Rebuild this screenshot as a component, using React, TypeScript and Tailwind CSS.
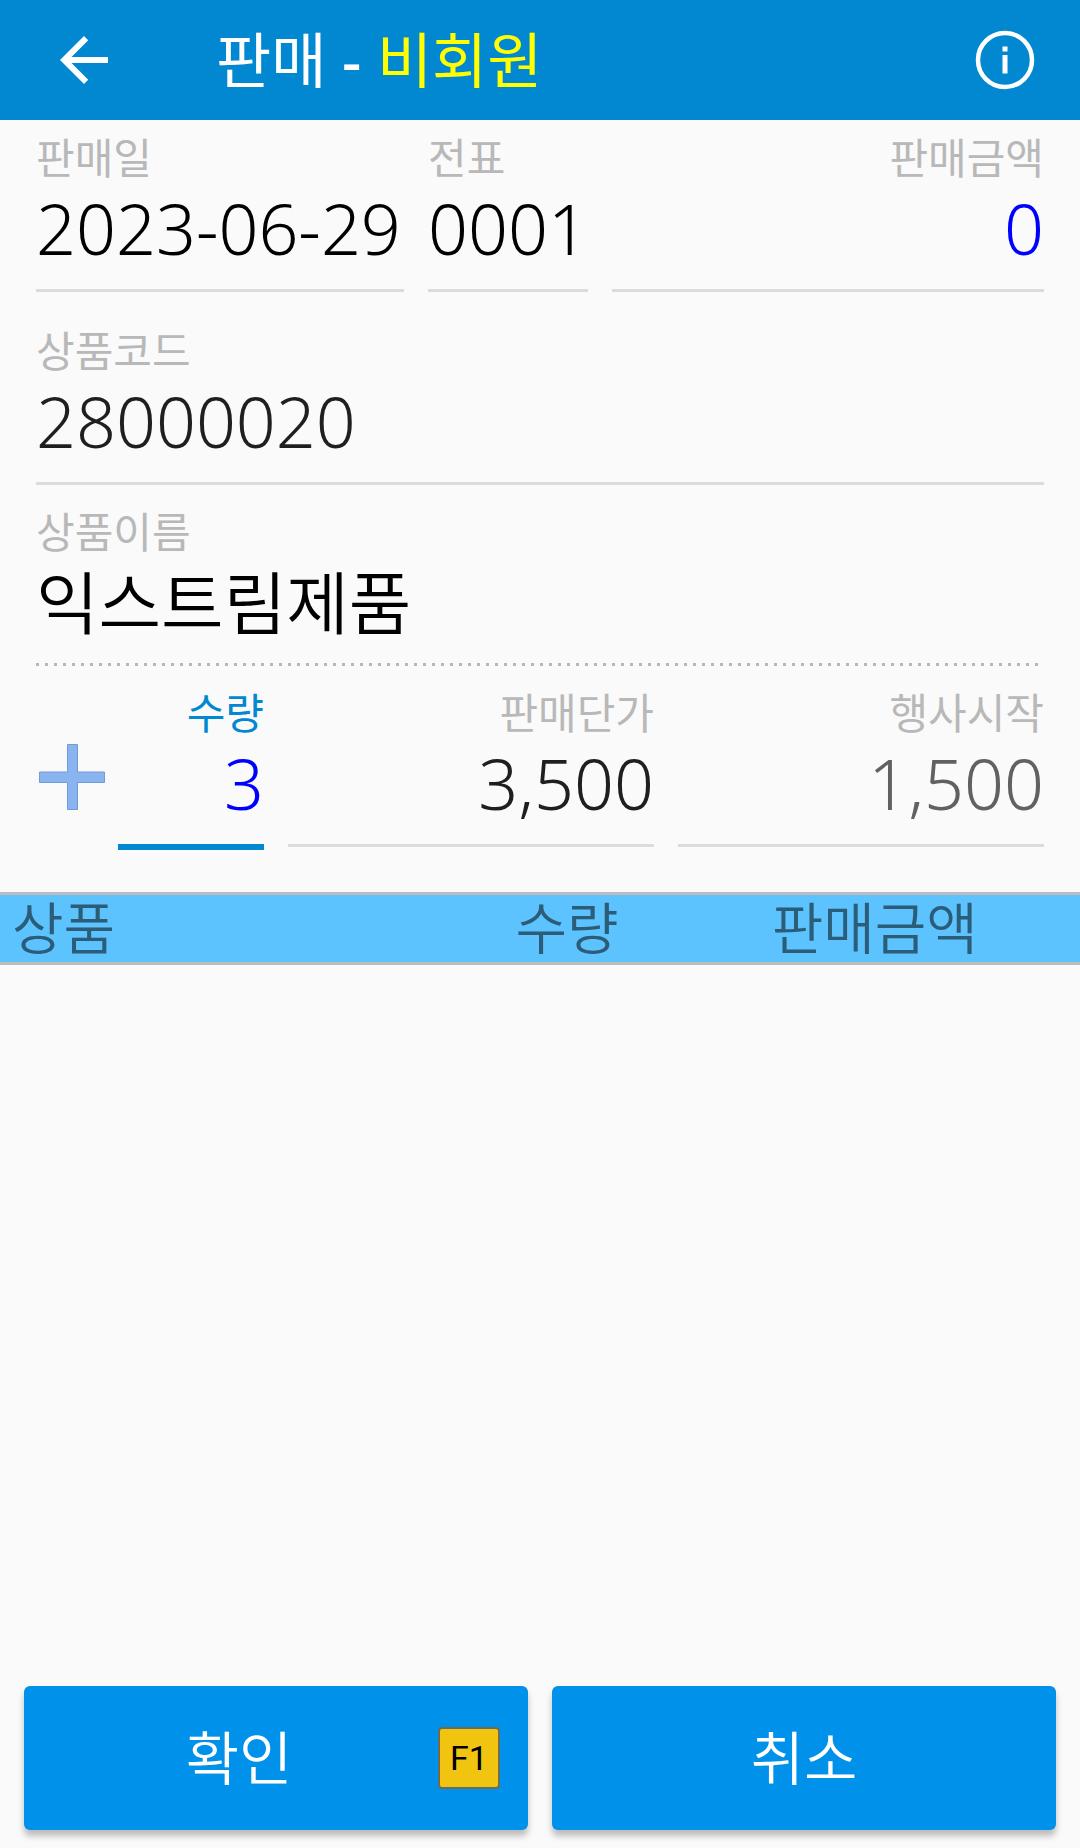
import { useState } from 'react';
import clsx from 'clsx';

interface FieldProps {
    id: string;
    label: string;
    value: string;
    onChange?: (value: string) => void;
    className?: string;
    inputClassName?: string;
    line?: 'solid' | 'dotted' | 'active';
    right?: boolean;
}

const Field = ({
    id,
    label,
    value,
    onChange,
    className,
    inputClassName = 'text-black',
    line = 'solid',
    right = false,
}: FieldProps) => (
    <div className={clsx('flex min-w-0 flex-col pt-2.5', right && 'text-right', className)}>
        <label
            htmlFor={id}
            className={clsx(
                'text-[42px] leading-[56px] whitespace-nowrap',
                line === 'active' ? 'text-[#0288d1]' : 'text-[#b8b8b8]'
            )}
        >
            {label}
        </label>
        <input
            id={id}
            value={value}
            readOnly={!onChange}
            onChange={(e) => onChange?.(e.target.value)}
            className={clsx(
                'mb-[18px] h-[85px] w-full min-w-0 bg-transparent font-[350] outline-none',
                right && 'text-right',
                inputClassName,
                line === 'dotted' ? 'text-[68px]' : 'text-[70px]'
            )}
        />
        {/* Underline */}
        <div className="h-[3px]">
            {line === 'solid' && <div className="h-[3px] bg-[#dcdcdc]" />}
            {line === 'active' && <div className="h-1.5 bg-[#0288d1]" />}
            {line === 'dotted' && (
                <div className="h-[3px] bg-[repeating-linear-gradient(90deg,#b8b8b8_0px_3px,transparent_3px_9px)]" />
            )}
        </div>
    </div>
);

const App = () => {
    const [date, setDate] = useState('2023-06-29');
    const [slip, setSlip] = useState('0001');
    const [code, setCode] = useState('28000020');
    const [quantity, setQuantity] = useState('3');
    const [price, setPrice] = useState('3,500');

    const addOne = () => setQuantity(String((parseInt(quantity, 10) || 0) + 1));

    return (
        <div className="flex min-h-screen flex-col bg-[#fafafa] font-['Noto_Sans','Noto_Sans_CJK_KR',sans-serif]">
            {/* App bar */}
            <header className="flex h-[120px] items-center bg-[#0288d1] pr-9 pl-12 text-white">
                <button type="button" aria-label="뒤로">
                    <svg viewBox="0 0 24 24" className="size-[72px]" fill="currentColor">
                        <path d="M20 11H7.83l5.59-5.59L12 4l-8 8 8 8 1.41-1.41L7.83 13H20v-2z" />
                    </svg>
                </button>
                <h1 className="ml-24 flex-1 text-[60px] leading-[80px] whitespace-nowrap">
                    판매 <span className="font-medium">-</span> <span className="text-[#ffff00]">비회원</span>
                </h1>
                <button type="button" aria-label="정보">
                    <svg viewBox="0 0 78 78" className="size-[78px]" fill="none">
                        <circle cx="39" cy="39" r="27" stroke="currentColor" strokeWidth="4.5" />
                        <path d="M36.5 25.5h5v5h-5zM36.5 34h5v18.5h-5z" fill="currentColor" />
                    </svg>
                </button>
            </header>

            {/* Sale form */}
            <form className="px-9" onSubmit={(e) => e.preventDefault()}>
                <div className="flex gap-6">
                    <Field id="date" label="판매일" value={date} onChange={setDate} className="w-[368px]" />
                    <Field id="slip" label="전표" value={slip} onChange={setSlip} className="w-40" />
                    <Field
                        id="total"
                        label="판매금액"
                        value="0"
                        right
                        className="flex-1"
                        inputClassName="text-[#0000ff]"
                    />
                </div>
                <Field
                    id="code"
                    label="상품코드"
                    value={code}
                    onChange={setCode}
                    className="mt-[21px]"
                    inputClassName="text-[#1f1f1f]"
                />
                <Field id="name" label="상품이름" value="익스트림제품" line="dotted" className="mt-[9px]" />
                <div className="mt-[9px] flex gap-6">
                    <div className="flex">
                        <button type="button" aria-label="수량 추가" onClick={addOne} className="mr-3 pt-8">
                            <svg viewBox="0 0 70 70" className="size-[70px]">
                                <path
                                    d="M31.5 2.5h10v27.5h27v10.5h-27v27h-10v-27h-28v-10.5h28z"
                                    fill="#8ab4f0"
                                    stroke="#719bd6"
                                />
                            </svg>
                        </button>
                        <Field
                            id="quantity"
                            label="수량"
                            value={quantity}
                            onChange={setQuantity}
                            line="active"
                            right
                            className="w-[146px]"
                            inputClassName="text-[#0000ff]"
                        />
                    </div>
                    <Field
                        id="price"
                        label="판매단가"
                        value={price}
                        onChange={setPrice}
                        right
                        className="flex-1"
                        inputClassName="text-[#1f1f1f]"
                    />
                    <Field
                        id="event"
                        label="행사시작"
                        value="1,500"
                        right
                        className="flex-1"
                        inputClassName="text-[#616161]"
                    />
                </div>
            </form>

            {/* Item list */}
            <main className="mt-[45px] flex-1">
                <table className="w-full table-fixed">
                    <thead className="block border-y-3 border-[#bdbdbd] bg-[#5cc3ff]">
                        <tr className="flex h-[67px] items-center text-[56px] leading-[64px] text-[#2b5c78]">
                            <th className="w-[43%] pb-1 pl-3 text-left font-[350]">상품</th>
                            <th className="w-[19%] pb-1 font-[350]">수량</th>
                            <th className="w-[38%] pb-1 font-[350]">판매금액</th>
                        </tr>
                    </thead>
                    <tbody />
                </table>
            </main>

            {/* Actions */}
            <footer className="grid grid-cols-2 gap-6 px-6 pb-[18px] text-[58px] font-[350] text-white">
                <button
                    type="button"
                    className="flex h-36 items-center rounded-md bg-[#0091ea] pr-7 shadow-[0_6px_6px_rgba(0,0,0,0.25)]"
                >
                    <span className="flex-1 pb-0.5 pl-4">확인</span>
                    <kbd className="flex size-[62px] items-center justify-center rounded-sm border-2 border-[#6b6b5c] bg-[#f1c40f] font-[Roboto,sans-serif] text-[34px] font-normal text-black">
                        F1
                    </kbd>
                </button>
                <button
                    type="button"
                    className="h-36 rounded-md bg-[#0091ea] pb-0.5 shadow-[0_6px_6px_rgba(0,0,0,0.25)]"
                >
                    취소
                </button>
            </footer>
        </div>
    );
};

export default App;
